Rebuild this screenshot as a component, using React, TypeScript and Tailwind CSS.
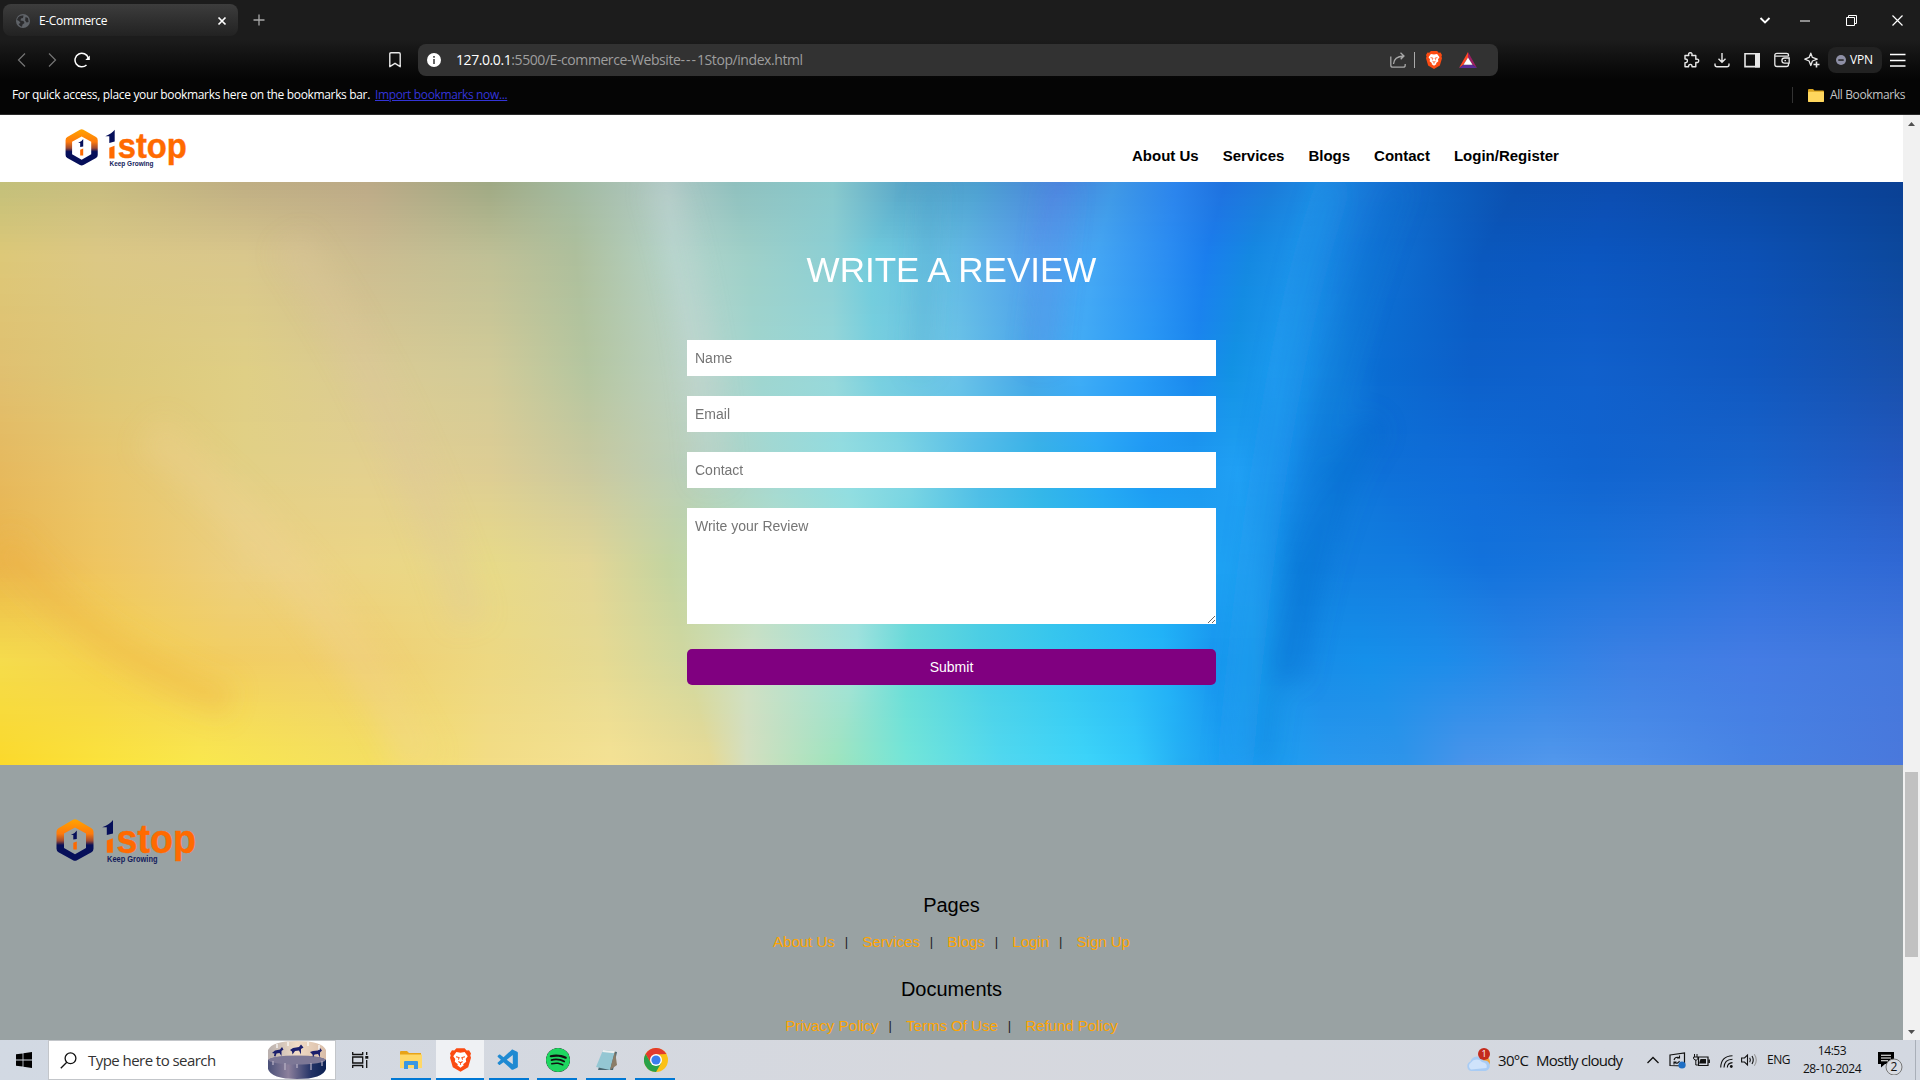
import React from "react";
import { SiSpotify } from "react-icons/si";
import { VscVscode } from "react-icons/vsc";

/* ---------- Hero backdrop: colour tracks sampled along seven heights ---------- */

const HEIGHTS = [0, 72, 189, 285, 381, 476, 583];

const TRACKS: [number, string][][] = [
  [[0, "c3c07a"], [0, "ddc878"], [0, "e0c070"], [0, "e6b95e"], [0, "ebb64c"], [0, "f5dc4c"], [0, "fbd92a"]],
  [[80, "c8bd80"], [80, "dcc885"], [80, "ddc878"], [80, "e8c56c"], [80, "efc560"], [80, "f5d24f"], [80, "fbe33a"]],
  [[200, "bfae83"], [200, "d9c78c"], [200, "dfcf85"], [200, "e2d085"], [200, "ecd082"], [180, "f2cd60"], [160, "fae94c"]],
  [[300, "bcaa87"], [300, "ccbc90"], [300, "dacb93"], [300, "e3d08e"], [300, "ebd585"], [300, "f0cf70"], [300, "f4e060"]],
  [[400, "9fa984"], [400, "bfc096"], [400, "d2cb98"], [400, "ddcd94"], [400, "e7da88"], [400, "edd882"], [400, "f3dd85"]],
  [[470, "a2baa2"], [470, "aebf9c"], [480, "b4c6a0"], [480, "c9c99f"], [480, "e3d695"], [490, "e5da92"], [500, "f5e294"]],
  [[545, "b0c8c4"], [550, "b4d4ca"], [570, "bcd4ca"], [560, "b9cfba"], [545, "c4d4a0"], [560, "d0d8a0"], [582, "e7da95"]],
  [[600, "8fc0be"], [610, "9fd0c8"], [620, "9fd6d0"], [635, "a2d9d4"], [630, "b5dfc8"], [610, "cfe0c4"], [610, "d4dfc0"]],
  [[680, "88c8cc"], [680, "8ccfd4"], [680, "98d8da"], [690, "90dde2"], [700, "98e0dc"], [700, "a0e2dd"], [680, "a0e4bc"]],
  [[740, "58a6c8"], [710, "72ccdc"], [715, "78cfdf"], [740, "80d6e4"], [750, "68d2e0"], [740, "68dcd8"], [740, "74e6d8"]],
  [[800, "4c9fd0"], [780, "64bbe4"], [780, "6cc4e8"], [800, "50bce8"], [800, "4cc8e4"], [800, "4cd0e4"], [820, "50d8f0"]],
  [[865, "4a84dc"], [840, "56a2ec"], [840, "48a8e8"], [850, "34b4e8"], [850, "34c0ec"], [860, "38c8ee"], [890, "3cd4fa"]],
  [[910, "3f97e4"], [895, "44a6f4"], [880, "40acf6"], [900, "25a8f4"], [900, "28b4f2"], [920, "2cbcf6"], [930, "32c8fa"]],
  [[960, "2b84ec"], [955, "2a8cf2"], [930, "2a9df6"], [940, "1c98f4"], [945, "20aef4"], [950, "22b4f8"], [965, "24aef4"]],
  [[1000, "1f72de"], [985, "1a7eee"], [975, "1a88ee"], [975, "1c98f0"], [990, "1ea4f4"], [990, "1896ee"], [1000, "1c9ef2"]],
  [[1040, "1c7cda"], [1020, "1488e2"], [1005, "1292e4"], [1010, "20a0f4"], [1020, "1e9cf0"], [1025, "189aec"], [1050, "1e9cf0"]],
  [[1075, "1c8ae2"], [1055, "1c90e8"], [1040, "1c98ee"], [1045, "1a90ec"], [1060, "1086e2"], [1070, "168ce8"], [1090, "2a98ee"]],
  [[1130, "1672d4"], [1105, "147cdc"], [1090, "1484e0"], [1090, "0e7cdc"], [1100, "127ee0"], [1115, "1590ea"], [1150, "3094ea"]],
  [[1180, "0d60c0"], [1145, "0e6cd0"], [1125, "0a6cd2"], [1130, "0e70d8"], [1150, "127ce0"], [1180, "1c8cea"], [1200, "4c94ea"]],
  [[1240, "0b4fae"], [1210, "0a58be"], [1200, "0c60ca"], [1200, "106cd8"], [1210, "1272dc"], [1250, "2c84e6"], [1270, "5498ec"]],
  [[1320, "0c4caf"], [1300, "0b56c0"], [1300, "1060cc"], [1300, "1064d0"], [1300, "1a74dc"], [1330, "3c80e4"], [1340, "5090ea"]],
  [[1430, "0a48a2"], [1430, "0c50b4"], [1430, "1058c0"], [1430, "1864cc"], [1430, "2c70dc"], [1430, "447ce4"], [1430, "4884e4"]],
  [[1554, "0a4094"], [1554, "0c489c"], [1554, "1850ac"], [1554, "2458c0"], [1554, "3068d4"], [1554, "4478dc"], [1554, "4a78dc"]],
];

/* Thin slanted rays laid over the colour field. */
const RAYS = [
  { d: "M1335 0Q1270 180 1235 583", color: "#2aa0f2", width: 20, opacity: 0.35 },
  { d: "M1400 0Q1300 260 1262 583", color: "#0a66c8", width: 16, opacity: 0.3 },
  { d: "M1375 240Q1325 300 1290 500", color: "#0a62c6", width: 26, opacity: 0.35 },
  { d: "M930 0L920 190", color: "#4a9cc4", width: 16, opacity: 0.3 },
  { d: "M1060 0L1040 180", color: "#5c8ce8", width: 22, opacity: 0.35 },
  { d: "M660 0Q700 120 712 300", color: "#c4d8d4", width: 26, opacity: 0.35 },
  { d: "M0 360Q90 470 230 520", color: "#eeb244", width: 34, opacity: 0.35 },
  { d: "M150 250Q330 400 420 583", color: "#f4d49a", width: 40, opacity: 0.25 },
  { d: "M290 60Q400 220 470 440", color: "#e0c4a0", width: 34, opacity: 0.25 },
];

const channel = (hex: string, i: number) => parseInt(hex.slice(i * 2, i * 2 + 2), 16);

function stripGradient(y: number) {
  let row = 0;
  while (row < HEIGHTS.length - 2 && y > HEIGHTS[row + 1]) row++;
  const t = (y - HEIGHTS[row]) / (HEIGHTS[row + 1] - HEIGHTS[row]);
  return TRACKS.map((track) => {
    const [xa, ca] = track[row];
    const [xb, cb] = track[row + 1];
    const rgb = [0, 1, 2].map((i) => Math.round(channel(ca, i) * (1 - t) + channel(cb, i) * t));
    return { offset: (xa * (1 - t) + xb * t) / 1554, color: `rgb(${rgb.join(",")})` };
  });
}

const STRIP = 4;
const STRIPS = Array.from({ length: 146 }, (_, i) => i * STRIP);

function Backdrop() {
  return (
    <svg className="absolute inset-0 h-full w-full" viewBox="0 0 1903 583" preserveAspectRatio="none">
      <defs>
        {STRIPS.map((y) => (
          <linearGradient key={y} id={`strip-${y}`} x1="0" x2="1" y1="0" y2="0">
            {stripGradient(y).map((s, i) => (
              <stop key={i} offset={s.offset} stopColor={s.color} />
            ))}
          </linearGradient>
        ))}
        <filter id="soft" filterUnits="userSpaceOnUse" x="-100" y="-100" width="2103" height="783">
          <feGaussianBlur stdDeviation="12" />
        </filter>
      </defs>
      <g shapeRendering="crispEdges">
        {STRIPS.map((y) => (
          <rect key={y} x="0" y={y} width="1903" height={STRIP} fill={`url(#strip-${y})`} />
        ))}
      </g>
      <g filter="url(#soft)" fill="none">
        {RAYS.map((ray) => (
          <path key={ray.d} d={ray.d} stroke={ray.color} strokeWidth={ray.width} opacity={ray.opacity} />
        ))}
      </g>
    </svg>
  );
}

/* ---------- Brand logo ---------- */

function Logo({ className, id }: { className: string; id: string }) {
  return (
    <svg className={"overflow-visible " + className} viewBox="0 0 140 46">
      <defs>
        <linearGradient id={id} x1="0" x2="0" y1="0" y2="1">
          <stop offset="0" stopColor="#ffa400" />
          <stop offset="0.35" stopColor="#ff7a0c" />
          <stop offset="0.52" stopColor="#a04a30" />
          <stop offset="0.62" stopColor="#060f5a" />
          <stop offset="1" stopColor="#060f5a" />
        </linearGradient>
      </defs>
      <path
        fillRule="evenodd"
        fill={`url(#${id})`}
        d="M17 .8q2-1.1 4 0l14.500 8.500q2 1.200 2 3.500v17q0 2.300-2 3.500L21 41.300q-2 1.100-4 0L2.500 33.300q-2-1.200-2-3.500v-17q0-2.300 2-3.500zM19 8.500 8 14.600v14.500l11 6.200 11-6.200V14.600z"
      />
      <path d="M20.800 11.600v8.400l-3.500.6v-4.500h-2.400q4.500-1.800 5.900-4.500z" fill="#060f5a" />
      <path d="M17.300 23.800l3.500-1.300v7.900h-3.500z" fill="#ff6a00" />
      <path d="M57 1v13.500L50.800 16V8.200h-4.600Q54 5.400 57 1z" fill="#060f5a" />
      <path d="M50.800 21.500l6-2.200v14.500h-6z" fill="#ff6a00" />
      <text x="60.500" y="33.900" textLength="79.500" lengthAdjust="spacingAndGlyphs" fontSize="40.500" fontWeight="700" fill="#ff6a00" stroke="#ff6a00" strokeWidth="0.500" fontFamily="Liberation Sans, sans-serif">stop</text>
      <text x="51" y="43" textLength="50.500" lengthAdjust="spacingAndGlyphs" fontSize="8.300" fontWeight="700" fill="#141c5c" fontFamily="Liberation Sans, sans-serif">Keep Growing</text>
    </svg>
  );
}

/* ---------- Browser window ---------- */

type IconProps = { className?: string; children: React.ReactNode; box?: string };

function Line({ className = "", children, box = "0 0 16 16" }: IconProps) {
  return (
    <svg className={"shrink-0 " + className} viewBox={box} fill="none" stroke="currentColor">
      {children}
    </svg>
  );
}

function BraveLion({ className }: { className: string }) {
  return (
    <svg className={"shrink-0 " + className} viewBox="0 0 18 20">
      <path d="M5.500 0h7l1.800 1.800 2-.2L18 4.500l-.6 1.600.6 2-2.400 8.200L9 20l-6.600-3.700L0 8.100l.6-2L0 4.500l1.700-2.900 2 .2z" fill="#fb4b12" />
      <path d="M5.500 3.200 9 3.800l3.500-.6 2.700 3.600-1.700 2.400.4 2.300-2.700 2.100.6.9L9 16.600l-2.800-2.100.6-.9-2.700-2.100.4-2.300-1.700-2.400z" fill="#fff" />
      <path d="M5.200 7.300l2.600.6-.6 1.800M12.800 7.300l-2.600.6.6 1.800M7.200 11.300L9 12.400l1.800-1.100M9 12.400v1.600" fill="none" stroke="#fb4b12" strokeWidth="0.900" />
    </svg>
  );
}

function TabStrip() {
  return (
    <div className="flex h-10 items-start bg-[#1c1c1c] text-white">
      <div className="ml-[3px] mt-1 flex h-8 w-[235px] items-center rounded-lg bg-linear-to-b from-[#3d3d3d] to-[#222222] pl-[13px] pr-[10px] pt-[1px]">
        <svg className="size-[14px] shrink-0" viewBox="0 0 14 14">
          <circle cx="7" cy="7" r="7" fill="#5f6368" />
          <path d="M2 3.500Q4 1 7.500 1.500L7 4l-2 .5-.5 2 3 .5 1 2-2 1.500-.5 2.300Q4 12.500 2.500 10L4.500 9 3 7 1 6zM9.500 3l2.500 1 .6 4-2 .5-1.500-2z" fill="#2b2b2d" />
        </svg>
        <span className="ml-[9px] mt-px text-[12px] leading-4 tracking-[-0.35px]">E-Commerce</span>
        <Line className="ml-auto size-[12px]" box="0 0 12 12">
          <path d="M2.500 2.500l7 7M9.500 2.500l-7 7" strokeWidth="1.700" />
        </Line>
      </div>
      <Line className="ml-[15px] mt-[14px] size-3 text-[#a8a8a8]" box="0 0 12 12">
        <path d="M6 .5v11M.5 6h11" strokeWidth="1.300" />
      </Line>
      <div className="ml-auto flex h-10 items-center">
        <Line className="mr-[29px] size-[12px]" box="0 0 12 12">
          <path d="M1.500 4L6 8.500 10.500 4" strokeWidth="1.900" />
        </Line>
        <Line className="mr-[35px] size-[11px]" box="0 0 11 11">
          <path d="M0 6h10" />
        </Line>
        <Line className="mr-[35px] size-[11px]" box="0 0 11 11">
          <path d="M.5 2.500h8v8h-8zM2.500 2.500v-2h8v8h-2" />
        </Line>
        <Line className="mr-[17px] size-[11px]" box="0 0 11 11">
          <path d="M.5.500l10 10M10.500.500l-10 10" strokeWidth="1.200" />
        </Line>
      </div>
    </div>
  );
}

function Toolbar() {
  return (
    <div className="flex h-10 items-center bg-linear-to-b from-[#1c1c1c] to-[#050505] text-[#e8e8e8]">
      <Line className="ml-[14px] size-4 text-[#757575]">
        <path d="M11 1.500L4.500 8l6.500 6.500" strokeWidth="1.200" />
      </Line>
      <Line className="ml-[14px] size-4 text-[#757575]">
        <path d="M5 1.500L11.500 8 5 14.500" strokeWidth="1.200" />
      </Line>
      <Line className="ml-[14px] size-4 text-white">
        <path d="M12.500 13A6.800 6.800 0 1 1 14.300 6" strokeWidth="1.500" />
        <path d="M15.800 3.500V8h-4.500z" fill="currentColor" stroke="none" />
      </Line>
      <Line className="ml-[297px] size-4">
        <path d="M2.800 2q0-1.200 1.200-1.200h8q1.200 0 1.200 1.200v12.700L8 11.300l-5.200 3.400z" strokeWidth="1.400" strokeLinejoin="round" />
      </Line>
      <div className="ml-[15px] flex h-8 w-[1080px] items-center rounded-lg bg-[#323232]">
        <svg className="ml-[9px] size-[14px]" viewBox="0 0 14 14">
          <circle cx="7" cy="7" r="7" fill="#fff" />
          <path d="M6.100 3h1.800v1.700H6.100zM6.100 6h1.800v5H6.100z" fill="#555" />
        </svg>
        <span className="ml-[15px] whitespace-nowrap text-[14px] leading-5 tracking-[-0.42px] text-[#9e9e9e]">
          <span className="text-white">127.0.0.1</span>:5500/E-commerce-Website<span className="tracking-[1px]">---</span>1Stop/index.html
        </span>
        <Line className="ml-auto size-4 text-[#a8a8a8]">
          <path d="M.8 4.500v8.700q0 2 2 2h10.400q2 0 2-2V12M3.500 12Q4 4.500 13.500 4M10.500.800L14 4l-3.300 3.300" strokeWidth="1.300" />
        </Line>
        <div className="ml-[8px] h-4 w-px bg-[#aaaaaa]" />
        <BraveLion className="ml-[11px] h-[18px] w-4" />
        <svg className="ml-[17px] mr-[21px] h-4 w-[18px]" viewBox="0 0 18 16">
          <path d="M9 0v5.500L4.500 12.800 0 16z" fill="#ff4724" />
          <path d="M9 0l9 16-4.500-3.200L9 5.500z" fill="#9e1f63" />
          <path d="M0 16l4.500-3.200h9L18 16z" fill="#5b2d96" />
          <path d="M9 5.500l4.500 7.300h-9z" fill="#fff" />
        </svg>
      </div>
      <Line className="ml-[186px] size-4">
        <path d="M1 3.500h3.800q-.9-2.700 1.500-2.700T7.800 3.500h4v3.800q2.900-.7 2.900 1.500t-2.900 1.600v4.300H8q.1-2.300-1.700-2.300T4.600 14.700H1v-4q2.400 0 2.400-1.900T1 7z" strokeWidth="1.400" strokeLinejoin="round" />
      </Line>
      <Line className="ml-[14px] size-4">
        <path d="M8 1v9M4.500 6.800L8 10.300l3.500-3.500M1 11.500v1.200q0 2 2 2h10q2 0 2-2v-1.200" strokeWidth="1.400" />
      </Line>
      <svg className="ml-[14px] size-4 shrink-0" viewBox="0 0 16 16">
        <path d="M1 1.800h14v12.800H1z" fill="none" stroke="#e8e8e8" strokeWidth="1.600" />
        <path d="M11 1h5v14.500h-5z" fill="#e8e8e8" />
      </svg>
      <Line className="ml-[14px] size-4">
        <path d="M14.500 4.500V3.300q0-2-2-2H3q-2.200 0-2.200 2v9q0 2.200 2.200 2.200h9.500q2 0 2-2v-1M.8 4.200h13.700M15.200 6H10.500a2.600 2.600 0 0 0 0 5.200h4.700zM10.500 8.600h1.500" strokeWidth="1.300" />
      </Line>
      <Line className="ml-[14px] size-4">
        <path d="M6.800 1.200l1.600 4.200 4.800 1.800-4.800 1.800-1.600 4.500-1.700-4.500L.8 7.200l4.300-1.800z" strokeWidth="1.300" strokeLinejoin="round" />
        <path d="M12.500 9.500v6M9.500 12.500h6" strokeWidth="1.600" />
      </Line>
      <div className="ml-2 flex h-[26px] w-[54px] items-center rounded-lg bg-[#222222]">
        <svg className="ml-2 size-[10px]" viewBox="0 0 10 10">
          <circle cx="5" cy="5" r="5" fill="#8f90a6" />
          <path d="M2.300 4.300h5.400v1.500H2.300z" fill="#222" />
        </svg>
        <span className="ml-1 text-[12px] tracking-[-0.2px] text-white">VPN</span>
      </div>
      <Line className="ml-2 size-4 text-white">
        <path d="M0 2.500h15.500M0 8.500h15.500M0 14h15.500" strokeWidth="1.300" />
      </Line>
    </div>
  );
}

function BookmarksBar() {
  return (
    <div className="flex h-[35px] items-center border-b border-[#2a2a2a] bg-[#050505] pb-[4px] text-[12px] text-white">
      <span className="ml-3 whitespace-nowrap tracking-[-0.34px]">For quick access, place your bookmarks here on the bookmarks bar.</span>
      <span className="ml-[5px] whitespace-nowrap tracking-[-0.36px] text-[#3434d8] underline">Import bookmarks now...</span>
      <div className="ml-auto h-4 w-px bg-[#333333]" />
      <svg className="ml-[15px] h-[13px] w-4" viewBox="0 0 16 13">
        <path d="M0 1q0-1 1-1h4l1.500 1.500H15q1 0 1 1V12q0 1-1 1H1q-1 0-1-1z" fill="#dba520" />
        <path d="M0 3.500q0-.800.800-.800h14.400q.8 0 .8.800V12q0 1-1 1H1q-1 0-1-1z" fill="#ffd75e" />
      </svg>
      <span className="ml-[6px] mr-[15px] whitespace-nowrap tracking-[-0.38px] text-[#c4c4c4]">All Bookmarks</span>
    </div>
  );
}

/* ---------- Page ---------- */

function SiteHeader() {
  return (
    <header className="flex h-[67px] bg-white pl-[65px]">
      <Logo id="hex-header" className="mt-[14px] h-10 w-[122px]" />
      <nav className="ml-[945px] mt-[32px] flex gap-[24px] text-[15px] font-bold leading-[18px] text-black">
        <a>About Us</a>
        <a>Services</a>
        <a>Blogs</a>
        <a>Contact</a>
        <a>Login/Register</a>
      </nav>
    </header>
  );
}

function ReviewForm() {
  return (
    <section className="relative h-[583px] overflow-hidden">
      <Backdrop />
      <form className="relative mx-auto flex w-[529px] flex-col text-[14px]">
        <h1 className="mt-[68px] text-center text-[35px] leading-10 text-white">WRITE A REVIEW</h1>
        <div className="mt-[50px] flex flex-col gap-5">
          {["Name", "Email", "Contact"].map((label) => (
            <input key={label} placeholder={label} className="h-9 bg-white px-2 placeholder:text-[#757575]" />
          ))}
          <textarea placeholder="Write your Review" className="h-[116px] resize bg-white px-2 py-2 placeholder:text-[#757575]" />
        </div>
        <button type="button" className="mt-[25px] h-9 rounded-[5px] bg-[#800080] text-white">Submit</button>
      </form>
    </section>
  );
}

function LinkRow({ links }: { links: string[] }) {
  return (
    <div className="flex h-[18px] justify-center text-[15px] leading-[18px]">
      {links.map((link, i) => (
        <React.Fragment key={link}>
          {i > 0 && <span className="ml-[10px] mr-[14.5px] w-[3px] text-[13px] text-[#222222]">|</span>}
          <a className="text-[#ffa500]">{link}</a>
        </React.Fragment>
      ))}
    </div>
  );
}

function SiteFooter() {
  return (
    <footer className="h-[275px] overflow-hidden bg-[#99a2a3]">
      <Logo id="hex-footer" className="ml-[56px] mt-[54px] h-[46px] w-[140px]" />
      <h2 className="mt-[28px] text-center text-[20px] leading-6 text-black">Pages</h2>
      <div className="mt-[16px]">
        <LinkRow links={["About Us", "Services", "Blogs", "Login", "Sign Up"]} />
      </div>
      <h2 className="mt-[26px] text-center text-[20px] leading-6 text-black">Documents</h2>
      <div className="mt-[16px]">
        <LinkRow links={["Privacy Policy", "Terms Of Use", "Refund Policy"]} />
      </div>
    </footer>
  );
}

function Scrollbar() {
  return (
    <div className="flex w-[17px] flex-col items-center bg-[#f1f1f1]">
      <svg className="h-[17px] w-[17px]" viewBox="0 0 17 17">
        <path d="M5 11l3.500-4 3.500 4z" fill="#505050" />
      </svg>
      <div className="mt-[640px] h-[185px] w-[13px] bg-[#c1c1c1]" />
      <svg className="mt-auto h-[17px] w-[17px]" viewBox="0 0 17 17">
        <path d="M5 7l3.500 4L12 7z" fill="#505050" />
      </svg>
    </div>
  );
}

/* ---------- Taskbar ---------- */

function Cake() {
  return (
    <svg className="h-[38px] w-[58px]" viewBox="0 0 58 38">
      <defs>
        <linearGradient id="cake-side" x1="0" x2="1">
          <stop offset="0" stopColor="#4a5078" />
          <stop offset="0.35" stopColor="#8c809c" />
          <stop offset="0.75" stopColor="#223266" />
          <stop offset="1" stopColor="#0c2152" />
        </linearGradient>
        <linearGradient id="cake-top" x1="0" x2="1">
          <stop offset="0" stopColor="#b9b0ae" />
          <stop offset="0.5" stopColor="#f1dcc6" />
          <stop offset="1" stopColor="#d9bda8" />
        </linearGradient>
      </defs>
      <path d="M0 9v19q3 10 29 10t29-10V9z" fill="url(#cake-side)" />
      <path d="M0 9Q4 0 29 0t29 9v10q-5-4-29-4T0 19z" fill="url(#cake-top)" />
      <ellipse cx="29" cy="19" rx="28.500" ry="4.500" fill="#7d7896" />
      <path d="M4 12l3-2.500 5-1 2-2.500 1.500 2.500-2 1.500v5l-2-3-3 .5-1 3-1.500-.5.5-2.500zM22 9l3-2 6-1 2-2.500 2.500 3-2.500 1.500v5.500l-2-4-4 .5-2.500 3.500-.5-3zM42 11l3-1 5-.5 2-2.500 2 2.500-2 2v5l-2-3.500-3.500.5-1.500 3-.5-3z" fill="#1b1f6c" />
      <path d="M5 20v4M17 22v7M29 23v4M43 22v7M54 20v5" stroke="#b9b3c6" strokeWidth="1.200" />
      <path d="M9 3v4M20 1v4M40 1v4M51 4v5" stroke="#ffffff" strokeWidth="1.200" />
    </svg>
  );
}

function TaskApp({ width, bar, active = false, children }: { width: string; bar: string; active?: boolean; children: React.ReactNode }) {
  return (
    <div className={"flex h-10 flex-col " + width + (active ? " bg-[#eff1f4]" : "")}>
      <div className="flex flex-1 items-center justify-center pt-[2px]">{children}</div>
      <div className={"h-[2px] bg-[#0078d4] " + bar} />
    </div>
  );
}

function Taskbar() {
  return (
    <div className="flex h-10 items-center bg-linear-to-r from-[#d2d9e3] via-[#d6d8de] to-[#d3d8e1] text-[#111111]">
      <svg className="ml-4 size-4" viewBox="0 0 16 16">
        <path d="M0 2.300L6.600 1.400v6.200H0zM7.400 1.300L16 0v7.600H7.400zM0 8.400h6.600v6.200L0 13.700zM7.400 8.400H16V16l-8.600-1.300z" fill="#000" />
      </svg>
      <div className="ml-4 flex h-10 w-[288px] items-center border border-[#c3c6ca] bg-white">
        <Line className="ml-[11px] size-[17px] text-[#111]" box="0 0 17 17">
          <circle cx="10.500" cy="6.300" r="5.400" strokeWidth="1.300" />
          <path d="M6.800 10.200L.8 16.200" strokeWidth="1.300" />
        </Line>
        <span className="ml-[11px] whitespace-nowrap text-[15px] tracking-[-0.55px] text-[#333333]">Type here to search</span>
        <div className="ml-auto mr-[9px]">
          <Cake />
        </div>
      </div>
      <Line className="ml-4 h-4 w-[17px]" box="0 0 17 16">
        <path d="M.7 0v2.500h10V0M.7 16v-2.500h10V16M.7 5h10v6H.7zM14.700 0v3M14.700 8v8" strokeWidth="1.300" />
        <path d="M13.300 4h3v2.700h-3z" fill="currentColor" stroke="none" />
      </Line>
      <div className="ml-[22px] flex">
        <TaskApp width="w-[45px]" bar="w-10">
          <svg className="mr-[5px] h-[18px] w-[22px]" viewBox="0 0 22 18">
            <path d="M0 1q0-1 1-1h6l2 2h12v4H0z" fill="#e8a317" />
            <path d="M0 3.500h22V17H0z" fill="#ffd867" />
            <path d="M4 18v-7q0-1 1-1h12q1 0 1 1v7h-4v-4H8v4z" fill="#3b97e3" />
          </svg>
        </TaskApp>
        <TaskApp width="w-[48px]" bar="w-full" active>
          <BraveLion className="h-6 w-[21px]" />
        </TaskApp>
        <TaskApp width="w-[49px]" bar="ml-[5px] w-10">
          <VscVscode className="size-[25px] text-[#1f8ad2]" />
        </TaskApp>
        <TaskApp width="w-[49px]" bar="ml-[4px] w-10">
          <SiSpotify className="size-6 rounded-full bg-[#111111] text-[#1ed760]" />
        </TaskApp>
        <TaskApp width="w-[49px]" bar="ml-[4px] w-10">
          <svg className="h-6 w-6" viewBox="0 0 24 24">
            <path d="M9 2l13 2-4 18H3z" fill="#4a6670" />
            <path d="M8 2l12 1-5 19-14-3z" fill="#94c7d3" />
            <path d="M8 2l12 1-.6 2.300L7.300 4z" fill="#eceff0" />
            <path d="M20 3l2 14-7 5z" fill="#8b7d68" />
          </svg>
        </TaskApp>
        <TaskApp width="w-[49px]" bar="ml-[4px] w-10">
          <svg className="size-6" viewBox="0 0 24 24">
            <circle cx="12" cy="12" r="12" fill="#fbc116" />
            <path d="M1.600 6A12 12 0 0 1 22.400 6L12 6.500 6.800 15z" fill="#e33b2e" />
            <path d="M1.600 6A12 12 0 0 0 12 24l5.200-9L6.800 15z" fill="#28a148" />
            <circle cx="12" cy="12" r="6" fill="#fff" />
            <circle cx="12" cy="12" r="4.600" fill="#3b7ded" />
          </svg>
        </TaskApp>
      </div>

      <div className="ml-auto flex h-10 items-center">
        <svg className="h-[24px] w-[25px]" viewBox="0 0 25 24">
          <circle cx="18" cy="14" r="6" fill="#f2a23a" />
          <path d="M5 23a5 5 0 0 1-.5-9.500A7 7 0 0 1 17.500 12.500 5.300 5.300 0 0 1 19.500 23z" fill="#a9ccf4" />
          <path d="M5 21.500a4 4 0 0 1 0-7A7 7 0 0 1 16 14q6 1 4.500 6z" fill="#cfe3fb" />
          <circle cx="18" cy="6" r="6" fill="#c42b1c" />
          <text x="18" y="9.300" textAnchor="middle" fontSize="9" fill="#fff">1</text>
        </svg>
        <span className="ml-[7px] w-[38px] text-[15px] tracking-[-0.7px]">30°C</span>
        <span className="w-[110px] whitespace-nowrap text-[15px] tracking-[-0.75px]">Mostly cloudy</span>
        <Line className="h-3 w-[14px]" box="0 0 14 12">
          <path d="M1.500 9L7 3.500 12.500 9" strokeWidth="1.300" />
        </Line>
        <svg className="ml-[9px] size-[17px]" viewBox="0 0 17 17">
          <path d="M1 3l14.500-2v13L1 13.500z" fill="none" stroke="#111" strokeWidth="1.200" />
          <path d="M5 8q1-3.500 5-2.500M5.500 10.500q3 2 5-1.500M10.500 3.500v2.500H8M5 12.500V10h2.500" fill="none" stroke="#111" strokeWidth="1.100" />
          <circle cx="13" cy="13" r="3.600" fill="#1f6fc4" />
        </svg>
        <svg className="ml-[7px] h-[13px] w-[17px]" viewBox="0 0 17 13">
          <path d="M5.500 3H15v8.500H5.500zM16.300 5.500V9" fill="none" stroke="#111" strokeWidth="1.200" />
          <path d="M7.500 5h5.500v4.500H6z" fill="#111" />
          <path d="M1.500 0v3M4 0v3M.6 3h4.300v1.800L3.500 6H2L.6 4.800zM2.800 6v5h2" fill="none" stroke="#111" strokeWidth="1" />
        </svg>
        <Line className="ml-[10px] mt-[2px] size-[13px]" box="0 0 13 13">
          <path d="M.7 12.500Q1 1 12.500.7M4 12.500Q4.200 4.500 12.500 4.200M7.300 12.500Q7.500 8 12.500 7.600" strokeWidth="1.100" />
          <circle cx="11.300" cy="11.500" r="1.400" fill="currentColor" stroke="none" />
        </Line>
        <Line className="ml-[8px] h-[14px] w-4" box="0 0 16 14">
          <path d="M.6 5h2.900L6.500 2v10l-3-3H.6zM8.700 4.800q1.400 2.200 0 4.400M11 3q2.500 4 0 8" strokeWidth="1.100" />
          <path d="M13.300 1.200q4 5.800 0 11.600" stroke="#999" strokeWidth="1.100" />
        </Line>
        <span className="ml-[10px] w-[26px] text-[12px] tracking-[-0.5px]">ENG</span>
        <div className="ml-[6px] flex w-[66px] flex-col items-center pb-px text-[12px] leading-[18px] tracking-[-0.45px]">
          <span>14:53</span>
          <span>28-10-2024</span>
        </div>
        <svg className="ml-[13px] h-[30px] w-[26px]" viewBox="0 -5 26 30">
          <path d="M0 2h16v12H7l-4 3.500V14H0z" fill="#000" />
          <path d="M3 5.300h10M3 8h10M3 10.700h7" stroke="#fff" strokeWidth="1.100" />
          <circle cx="16" cy="17" r="8" fill="#d9dce2" stroke="#777" />
          <text x="16" y="21.300" textAnchor="middle" fontSize="12" fill="#111">2</text>
        </svg>
        <div className="ml-[11px] mr-1 h-10 w-px bg-[#a9afb8]" />
      </div>
    </div>
  );
}

export default function App() {
  return (
    <div className="flex h-[1080px] w-[1920px] flex-col overflow-hidden bg-white font-['Open_Sans',sans-serif]">
      <div className="flex h-[115px] flex-col bg-[#050505]">
        <TabStrip />
        <Toolbar />
        <BookmarksBar />
      </div>
      <div className="flex h-[925px]">
        <main className="w-[1903px] font-['Liberation_Sans',Arial,sans-serif]">
          <SiteHeader />
          <ReviewForm />
          <SiteFooter />
        </main>
        <Scrollbar />
      </div>
      <Taskbar />
    </div>
  );
}
